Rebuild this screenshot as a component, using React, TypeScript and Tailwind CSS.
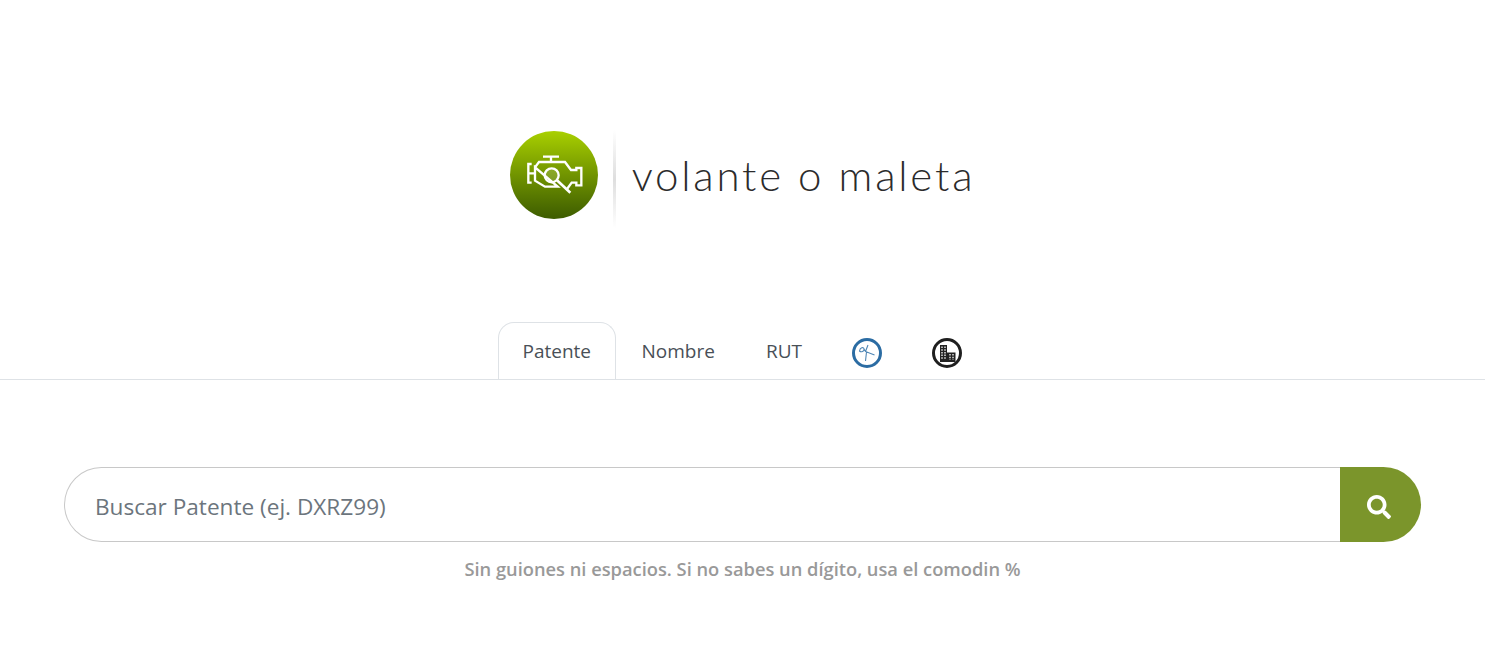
import { FaSearch } from "react-icons/fa";

function EngineLogo() {
  return (
    <div className="w-[88px] h-[88px] rounded-full bg-gradient-to-b from-[#a9d000] to-[#3d5c00] shrink-0">
      <svg viewBox="-15 -27 264 264" className="w-[88px] h-[88px]" fill="none" stroke="#ffffff" strokeWidth="7" strokeLinejoin="miter">
        <path d="M84 50H132M108 50V66" />
        <path d="M50 72H40V128H50M40 100H60" />
        <path d="M60 82L72 66H150L168 90H184V84H199V136H184V128H170L154 150M128 140H90L60 122V82Z" />
        <circle cx="110" cy="106" r="21" fill="#ffffff" fillOpacity="0.15" />
        <path d="M126 121L166 158" strokeWidth="8" />
      </svg>
    </div>
  );
}

function SismoIcon() {
  return (
    <svg viewBox="0 0 30 30" className="w-[30px] h-[30px]" fill="none">
      <circle cx="15" cy="15" r="13.500" stroke="#2b6ca3" strokeWidth="3" />
      <path d="M7.500 13C8 9.500 11.500 8.500 12 11C12.500 13.500 9 14.500 7.500 13ZM12 11L13.500 13.500M16 7L13.500 13.500L22.500 17M14.500 14L13.500 23" stroke="#4f86b5" strokeWidth="1.100" />
    </svg>
  );
}

function BuildingIcon() {
  return (
    <svg viewBox="0 0 30 30" className="w-[30px] h-[30px]">
      <circle cx="15" cy="15" r="13.500" fill="#ffffff" stroke="#1f1f1f" strokeWidth="3" />
      <path fill="#222222" d="M8 7H15V24H8ZM15 14.500H23.500V24H15Z" />
      <path stroke="#ffffff" strokeWidth="1.300" strokeDasharray="1.500 1.200" d="M10 8.500V22M13 8.500V22M18 16V22M21 16V22" />
    </svg>
  );
}

function Tab({ label, active }: { label: string; active?: boolean }) {
  return (
    <a
      className={
        active
          ? "h-[57px] px-6 flex items-center border border-b-0 border-[#dee2e6] rounded-t-[16px] bg-white text-[19px] text-[#495057]"
          : "h-[57px] px-[25.500px] pt-[2px] flex items-center text-[19px] text-[#495057]"
      }
    >
      {label}
    </a>
  );
}

export default function App() {
  return (
    <div className="min-h-[663px] bg-white font-['Open_Sans','Noto_Sans',sans-serif]">
      <div className="pt-[131px] flex justify-center">
        <div className="flex items-start">
          <EngineLogo />
          <div className="-mt-px ml-[15px] w-[3px] h-[98px] bg-gradient-to-b from-white via-[#dedede] to-white" />
          <div className="mt-[23px] ml-[16px] text-[42px] leading-none font-light tracking-[2.800px] text-[#2b2b2b] font-['Lato',sans-serif]">
            volante o maleta
          </div>
        </div>
      </div>

      <div className="mt-[94px] flex justify-center border-b border-[#dee2e6] h-[58px]">
        <Tab label="Patente" active />
        <Tab label="Nombre" />
        <Tab label="RUT" />
        <a className="h-[57px] px-[25px] pt-[16px]"><SismoIcon /></a>
        <a className="h-[57px] px-[25px] pt-[16px]"><BuildingIcon /></a>
      </div>

      <div className="mt-[87px] mx-16 flex h-[75px]">
        <div className="flex-1 flex items-center pl-[30px] pt-[5px] border border-r-0 border-[#c8c8c8] rounded-l-[38px] text-[22.600px] text-[#6c757d]">
          Buscar Patente (ej. DXRZ99)
        </div>
        <button className="w-[81px] flex items-center justify-center pr-[4px] pt-[5px] rounded-r-[38px] bg-[#7b952b] text-white text-[24px]">
          <FaSearch />
        </button>
      </div>

      <div className="mt-[14px] text-center text-[18.300px] font-semibold text-[#999999] leading-[26px]">
        Sin guiones ni espacios. Si no sabes un dígito, usa el comodin %
      </div>
    </div>
  );
}
